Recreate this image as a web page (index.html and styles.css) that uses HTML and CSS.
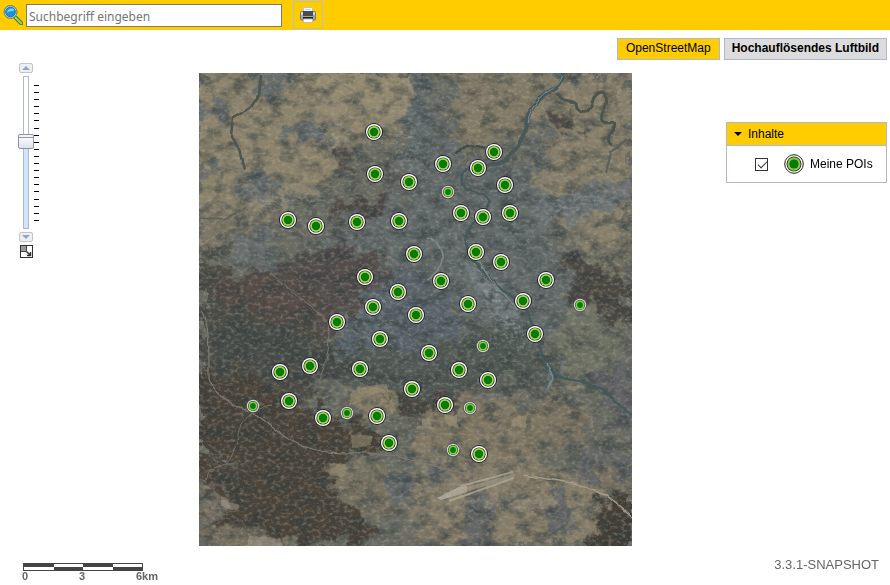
FILE: index.html
```html
<!DOCTYPE html>
<html lang="de">
<head>
    <meta charset="UTF-8">
    <meta name="viewport" content="width=device-width, initial-scale=1.0">
    <title>Karte</title>
    <link rel="stylesheet" href="styles.css">
</head>
<body>

    <header class="toolbar">
        <form class="search">
            <label for="search" aria-label="Suche">
                <svg width="20" height="20" viewBox="0 0 20 20">
                    <path d="M12.5 12.5l6 6" stroke="#3f7d1c" stroke-width="4" stroke-linecap="round"/>
                    <path d="M12.5 12.5l5.7 5.7" stroke="#a5d06a" stroke-width="2" stroke-linecap="round"/>
                    <circle cx="7.5" cy="7" r="6.5" fill="#b5d2dc" stroke="#6c7c58"/>
                    <circle cx="7.5" cy="7" r="4.8" fill="#1693e6" stroke="#1673ad"/>
                    <path d="M4 8c0-3 2-4.500 5-4.500 2 0 2.500 1 2 2-1.500 1-5 0-7 2.500z" fill="#82d3fb"/>
                </svg>
            </label>
            <input id="search" class="search-input" type="text" placeholder="Suchbegriff eingeben">
        </form>
        <button class="print" type="button" aria-label="Drucken">
            <svg width="16" height="16" viewBox="0 0 16 16">
                <path d="M3.500 0.500h9v6h-9z" fill="#f5f9fd" stroke="#b9c4cf"/>
                <path d="M5 2.500h6" stroke="#c9d3dd"/>
                <rect x="0.500" y="4.500" width="15" height="8.500" rx="1" fill="#a3a5ad" stroke="#74767e"/>
                <rect x="1" y="5" width="14" height="3" fill="#d3d5db"/>
                <rect x="3" y="4" width="10" height="5" fill="#4b4c53"/>
                <rect x="3" y="10" width="10" height="2" fill="#222"/>
                <path d="M3.500 12h9v3.500h-9z" fill="#fff" stroke="#b3bfca"/>
                <rect x="13" y="9" width="1" height="1" fill="#5bb34c"/>
            </svg>
        </button>
    </header>

    <nav class="baselayers">
        <button class="baselayer" type="button">OpenStreetMap</button>
        <button class="baselayer active" type="button">Hochauflösendes Luftbild</button>
    </nav>

    <main class="content">
        <div class="zoom">
            <div class="zoom-control">
                <button class="zoom-button" type="button" aria-label="Hineinzoomen">
                    <svg width="8" height="4" viewBox="0 0 8 4"><path d="M4 0l4 4H0z" fill="#8fa5cf"/></svg>
                </button>
                <input class="zoom-slider" type="range" min="0" max="19" value="11" aria-label="Zoomstufe">
                <button class="zoom-button" type="button" aria-label="Herauszoomen">
                    <svg width="8" height="4" viewBox="0 0 8 4"><path d="M0 0h8L4 4z" fill="#8fa5cf"/></svg>
                </button>
                <button class="zoom-full" type="button" aria-label="Gesamte Karte">
                    <svg width="13" height="13" viewBox="0 0 13 13">
                        <rect x="0.500" y="0.500" width="12" height="12" fill="#fff" stroke="#333"/>
                        <rect x="1" y="1" width="5" height="5" fill="#999"/>
                        <path d="M1 6.500h5.500V1" fill="none" stroke="#444"/>
                        <path d="M6.500 6.500l4 4M10.500 7v3.500H7" fill="none" stroke="#333" stroke-width="1.500"/>
                    </svg>
                </button>
            </div>
            <div class="ticks">
                <i></i><i></i><i></i><i></i><i></i><i></i><i></i><i></i><i></i><i></i>
                <i></i><i></i><i></i><i></i><i></i><i></i><i></i><i></i><i></i><i></i>
            </div>
        </div>

        <svg class="map" viewBox="0 0 433 473" role="img" aria-label="Luftbild">
            <defs>
                <!-- ausgefranste Ränder für Felder, Wald und Siedlung -->
                <filter id="rough" x="0" y="0" width="433" height="473" filterUnits="userSpaceOnUse" color-interpolation-filters="sRGB">
                    <feGaussianBlur stdDeviation="2.500" result="soft"/>
                    <feTurbulence type="fractalNoise" baseFrequency="0.06" numOctaves="6" seed="7" result="n"/>
                    <feDisplacementMap in="soft" in2="n" scale="45" xChannelSelector="R" yChannelSelector="G"/>
                </filter>
                <filter id="wobble" x="0" y="0" width="433" height="473" filterUnits="userSpaceOnUse" color-interpolation-filters="sRGB">
                    <feTurbulence type="fractalNoise" baseFrequency="0.08" numOctaves="2" seed="3" result="n"/>
                    <feDisplacementMap in="SourceGraphic" in2="n" scale="4" xChannelSelector="R" yChannelSelector="G"/>
                    <feGaussianBlur stdDeviation="0.4"/>
                </filter>
                <!-- dunkle und helle Körnung -->
                <filter id="dark" x="0" y="0" width="100%" height="100%" color-interpolation-filters="sRGB">
                    <feTurbulence type="fractalNoise" baseFrequency="0.06 0.09" numOctaves="6" seed="12"/>
                    <feColorMatrix values="0 0 0 0 0.19  0 0 0 0 0.23  0 0 0 0 0.24  2.500 0 0 0 -1.050"/>
                </filter>
                <filter id="light" x="0" y="0" width="100%" height="100%" color-interpolation-filters="sRGB">
                    <feTurbulence type="fractalNoise" baseFrequency="0.22 0.3" numOctaves="4" seed="31"/>
                    <feColorMatrix values="0 0 0 0 0.72  0 0 0 0 0.7  0 0 0 0 0.62  0 2.500 0 0 -1.150"/>
                </filter>
                <filter id="town" x="-20%" y="-40%" width="140%" height="180%" color-interpolation-filters="sRGB">
                    <feTurbulence type="fractalNoise" baseFrequency="0.2 0.3" numOctaves="4" seed="5"/>
                    <feColorMatrix values="0 0 0 0 0.64  0 0 0 0 0.69  0 0 0 0 0.73  0 5 0 0 -2.500" result="s"/>
                    <feGaussianBlur in="SourceAlpha" stdDeviation="7" result="m"/>
                    <feComposite in="s" in2="m" operator="in"/>
                </filter>
                <g id="poi">
                    <circle r="9" fill="#222"/>
                    <circle r="8" fill="#fff"/>
                    <circle r="6.600" fill="#222"/>
                    <circle r="5.900" fill="#9ade4e"/>
                    <circle r="4.200" fill="#2c5a1c"/>
                    <circle r="3.500" fill="#008000"/>
                </g>
                <g id="poi-small">
                    <circle r="6.900" fill="#4d4d4d"/>
                    <circle r="6.200" fill="#d3d3d3"/>
                    <circle r="5" fill="#333"/>
                    <circle r="4.500" fill="#88cf48"/>
                    <circle r="2.900" fill="#008000"/>
                </g>
            </defs>

            <rect width="433" height="473" fill="#696b63"/>

            <g filter="url(#rough)">
                <rect x="-30" y="-30" width="500" height="540" fill="#696b63"/>
                <!-- Felder -->
                <path d="M-20-20h235v75l-70 15-15 40-50 25-90 12z" fill="#8b826c"/>
                <path d="M90-20h125v68l-90-4z" fill="#938971"/>
                <path d="M220-20h145l-42 88-60 7-45-20z" fill="#817a66"/>
                <path d="M365-20h90v180l-45 20-80-40-5-70z" fill="#867e6a"/>
                <path d="M-20 135h95l-5 30-90 20z" fill="#7b7566"/>
                <path d="M345 180h100v90h-100z" fill="#777466"/>
                <path d="M345 240l80 5v90l-55-20z" fill="#6f7264"/>
                <!-- Siedlung -->
                <path d="M58-20h28v32l-8 18-20-8zM-20 28h50v14h-50zM84 50h50v18H84zM43 100h33v25H43z" fill="#666c6c"/>
                <path d="M-20 88h35v15h-35zM225 10h30v50h-35zM325 50h25v50h-25z" fill="#686c67"/>
                <path d="M205 25l25 15 35 45 60 10 30 30-5 45 35 35-25 50-35 15-65-20-75 50-45-60-10-80 80-40z" fill="#636a6a"/>
                <path d="M210 5h20l-5 45-20 15z" fill="#62696b"/>
                <path d="M340 125l95-20v25l-95 25z" fill="#6d7373"/>
                <path d="M35 155h40v35H35z" fill="#686e6d"/>
                <path d="M130 210l85-20 50 60-35 55-80 5z" fill="#59646a"/>
                <path d="M272 190l25 15 40 55 25 40-22 8-25-50-40-45z" fill="#70797b"/>
                <path d="M390 295h60v70l-50-30zM380 380h60v40h-60z" fill="#626465"/>
                <!-- Wald -->
                <path d="M135 78h22v18h-22zM355 43h20v20h-20zM125 135l60-15 10 18-60 10z" fill="#4f4a47"/>
                <path d="M80 185l65-15 45 15-15 25-25 35-30 25-90-45z" fill="#524d4b"/>
                <path d="M-20 175l35 10 30 25 50 20 30 35-30 20 25 40-90 10-60-45z" fill="#4d4d47"/>
                <path d="M10 207h90l25 35-40 10-70-25z" fill="#554b47"/>
                <path d="M20 240l80 20 60 30-10 20-80-10-50-20z" fill="#464b48"/>
                <path d="M-20 300l80 5 40 30 90 25-15 20-35 5 35 85h-215z" fill="#49433a"/>
                <path d="M160 270l60 10 70-20 30 30-70 35-100 10z" fill="#525955"/>
                <path d="M360 180l20 5 55 25v45l-30-10-30-25z" fill="#4b4843"/>
                <path d="M255 270l50-25 50 35-5 30-70-5zM330 310l60 20-20 10-50-20z" fill="#505853"/>
                <path d="M190 328l80-5v12l-80 8z" fill="#48463e"/>
                <path d="M385 430l55-15v80h-70z" fill="#433e37"/>
                <path d="M255 375l60-8v7l-58 9z" fill="#4c463d"/>
                <!-- Felder im Süden -->
                <path d="M150 315h45l5 25-45 15z" fill="#857b65"/>
                <path d="M220 340l50-15 70 10 20 30-30 30-60-15-55 5z" fill="#807764"/>
                <path d="M125 390h70l20 50h-40l-40-20z" fill="#787262"/>
                <path d="M210 388l120-5 80 35-30 65h-160z" fill="#857c69"/>
                <path d="M265 425h25v50h-25zM350 415h20v50h-20z" fill="#646565"/>
                <path d="M190 400h22v35h-22zM225 395h22v15h-22z" fill="#636869"/>
                <path d="M-20 455l100 5 5 30h-105z" fill="#746e5f"/>
                <path d="M345 320l50 15-10 45-50-10zM400 390l45 20v10l-50-5z" fill="#7a7262"/>
                <path d="M-20 405l30 5 20 30-30 15h-20zM205 460l40 5v20h-50z" fill="#746f62"/>
            </g>

            <rect width="433" height="473" filter="url(#dark)" opacity="0.6"/>
            <rect width="433" height="473" filter="url(#light)" opacity="0.38"/>

            <!-- helle Dächer -->
            <g opacity="0.55">
                <path d="M112 55h40v10h-40z" filter="url(#town)"/>
                <path d="M45 125l80-8v10l-70 8z" filter="url(#town)"/>
                <path d="M340 132l70-14v10l-70 14z" filter="url(#town)"/>
                <path d="M200 48h18v65h-22z" filter="url(#town)" opacity="0.7"/>
                <path d="M272 190l25 20 40 65-10 5-40-45z" filter="url(#town)"/>
                <path d="M255 427h110v8H245z" filter="url(#town)"/>
                <path d="M10 378l35 12v10l-30-8z" filter="url(#town)"/>
                <path d="M140 215h60v50h-50z" filter="url(#town)" opacity="0.4"/>
                <path d="M110 325h30v15h-30z" filter="url(#town)" opacity="0.5"/>
            </g>

            <g fill="none" filter="url(#wobble)">
                <!-- Fluss -->
                <path d="M365-2c-3 10-5 16-14 20-12 6-18 15-22 27-4 16-7 28-18 38-8 8-16 9-23 10" stroke="#46585a" stroke-width="4"/>
                <path d="M363 2c-4 10-8 14-17 18-9 7-14 16-17 30" stroke="#7f918f" stroke-width="1"/>
                <path d="M358 19c5 12 14 6 19 12 2 10 15 10 16 0 1-11 8-15 13-9 6 10-6 17-3 26 7 6 15-5 12 7-7 9-7 13-2 16" stroke="#4b554e" stroke-width="3"/>
                <path d="M256 80c8-7 20-9 30-5" stroke="#444c4b" stroke-width="2.500"/>
                <path d="M288 92c-15 1-28 4-25 19 2 9 22 5 29 17-3 13-28 24-25 42 3 17 16 27 28 40 12 13 28 15 35 32 5 14 12 30 15 48 8 17 24 15 39 19 20 6 29 15 50 34" stroke="#45595a" stroke-width="2.500"/>
                <path d="M348 290l6 16-6 10" stroke="#758b8c" stroke-width="1.500"/>
                <path d="M62 2l-2 20-8 12-18 10-2 20 8 12 5 20" stroke="#4c554f" stroke-width="2.500"/>
                <path d="M0 145l25 2 22-13" stroke="#5a6159" stroke-width="1.500"/>
                <path d="M428 66l-16 14-5 20" stroke="#59605a" stroke-width="2"/>
                <!-- Straßen -->
                <path d="M2 236c8 15 8 30 8 69 4 12 18 27 40 33 15 4 28 28 60 37 30 10 60 0 90 9 25 6 60 17 97 22" stroke="#7e7b70" stroke-width="1.200"/>
                <path d="M73 333c-23 2-35 18-34 32-3 12-8 20-12 27l-16 5-6 12M129 250c3 24-2 43-10 58" stroke="#7a776a" stroke-width="1"/>
                <path d="M125 0l22 14 10 5-10 24M71 200c15 12 28 22 57 48" stroke="#7c786b" stroke-width="1"/>
                <path d="M228 165c10 3 15 12 15 19s-6 18-14 22" stroke="#848a88" stroke-width="1.500"/>
                <path d="M325 402l47 8 35 12 26 22" stroke="#a39b85" stroke-width="1.500"/>
                <path d="M273 178l18 28 28 32" stroke="#8c9695" stroke-width="1"/>
                <!-- Steinbrüche und Lichtungen -->
                <g stroke="none" opacity="0.5">
                    <path d="M150 332l3-14 17-5 18-2 3 18-8-9-14 2-10 8z" fill="#9e9276"/>
                    <path d="M223 346l8-3 2 13-10-2zM245 343h14v12l-13-5zM314 345l15-3-2 14-15-3z" fill="#a3977e"/>
                    <path d="M366 314l18-2-8 7zM152 361l22 2-3 10-18 2zM131 391l16 1-3 12-12-2z" fill="#9d9176"/>
                    <path d="M22 427l20 5-4 5-16-4zM50 463l30 2 4 8H48z" fill="#a7a08f"/>
                </g>
            </g>

            <!-- Flugplatz -->
            <path d="M238 425l22-11 8-1v6l-26 8z" fill="#bbb9af" opacity="0.7"/>
            <path d="M250 428l65-23M262 413l52-14" stroke="#b9b19d" stroke-width="2" opacity="0.7"/>
            <path d="M252 421l62-18" stroke="#a39d8b" stroke-width="4" opacity="0.6"/>

            <g id="pois"></g>
        </svg>

        <aside class="side">
            <section class="layers">
                <h2 class="layers-title">
                    <svg width="8" height="5" viewBox="0 0 8 5"><path d="M0 0h8L4 4z"/></svg>
                    Inhalte
                </h2>
                <label class="layer">
                    <input class="layer-check" type="checkbox" checked>
                    <svg width="20" height="20" viewBox="-10 -10 20 20">
                        <circle r="9.300" fill="#fff" stroke="#222"/>
                        <circle r="7.500" fill="#222"/>
                        <circle r="6.700" fill="#84cb46"/>
                        <circle r="4.600" fill="#245c16"/>
                        <circle r="3.900" fill="#008000"/>
                    </svg>
                    Meine POIs
                </label>
            </section>
        </aside>
    </main>

    <footer class="bottom">
        <div class="scale">
            <div class="scale-bar"><i></i><i></i><i></i><i></i></div>
            <div class="scale-labels"><span>0</span><span>3</span><span>6km</span></div>
        </div>
        <div class="version">3.3.1-SNAPSHOT</div>
    </footer>

    <script>
        const big = [
            [175, 59], [176, 101], [210, 109], [244, 91], [279, 95], [295, 79], [306, 112],
            [262, 140], [284, 144], [311, 140], [89, 147], [117, 153], [158, 149], [200, 148],
            [215, 181], [277, 179], [302, 189], [347, 207], [166, 204], [242, 208], [199, 219],
            [174, 234], [217, 242], [269, 231], [324, 228], [138, 249], [181, 266], [336, 261],
            [230, 280], [161, 296], [111, 293], [81, 299], [260, 297], [289, 307], [213, 316],
            [90, 328], [246, 332], [124, 345], [178, 343], [190, 370], [280, 381]
        ];
        const small = [[249, 119], [381, 232], [284, 273], [54, 333], [148, 340], [271, 335], [254, 377]];

        function addPois(points, symbol) {
            const layer = document.getElementById('pois');
            points.forEach(([x, y]) => {
                const use = document.createElementNS('http://www.w3.org/2000/svg', 'use');
                use.setAttribute('href', symbol);
                use.setAttribute('x', x);
                use.setAttribute('y', y);
                layer.appendChild(use);
            });
        }

        addPois(small, '#poi-small');
        addPois(big, '#poi');
    </script>
</body>
</html>
```
FILE: styles.css
```css
* {
    box-sizing: border-box;
}

body {
    margin: 0;
    min-height: 100vh;
    display: flex;
    flex-direction: column;
    background: #fff;
    color: #000;
    font-family: 'Liberation Sans', Arial, sans-serif;
    font-size: 12px;
}

button {
    margin: 0;
    padding: 0;
    font: inherit;
    color: inherit;
}

svg {
    display: block;
}

.toolbar {
    display: flex;
    align-items: center;
    gap: 11px;
    height: 30px;
    padding-left: 3px;
    background: #ffcc00;
}

.search {
    display: flex;
    align-items: center;
    gap: 3px;
}

.search-input {
    width: 256px;
    height: 23px;
    padding: 2px 2px 0;
    border: 1px solid #7a7a7a;
    background: #fff;
    font-family: 'Noto Sans', sans-serif;
    font-size: 12px;
}

.search-input::placeholder {
    color: #757575;
}

.print {
    display: flex;
    align-items: center;
    justify-content: center;
    width: 30px;
    height: 28px;
    border: 1px solid #b6bdd2;
    background: #ffcc00;
}

.baselayers {
    display: flex;
    justify-content: flex-end;
    gap: 4px;
    padding: 8px 3px 0;
}

.baselayer {
    height: 22px;
    padding: 0 8px 2px;
    border: 1px solid #b2b8cb;
    background: #ffcc00;
}

.baselayer.active {
    padding: 0 7px 2px;
    background: #dcdcdc;
    font-weight: bold;
}

.content {
    display: grid;
    grid-template-columns: 199px minmax(0, 1fr) 258px;
    align-items: start;
}

.map {
    width: 100%;
    margin-top: 13px;
}

/* Zoomleiste */
.zoom {
    display: flex;
    padding: 3px 0 0 18px;
}

.zoom-control {
    display: flex;
    flex-direction: column;
    align-items: center;
    gap: 3px;
    width: 16px;
}

.zoom-button {
    display: flex;
    align-items: center;
    justify-content: center;
    width: 14px;
    height: 10px;
    border: 1px solid #c3c3cb;
    border-radius: 2px;
    background: #efefef;
}

.zoom-slider {
    appearance: none;
    writing-mode: vertical-lr;
    direction: rtl;
    width: 16px;
    height: 153px;
    margin: 0;
    background: none;
}

.zoom-slider::-webkit-slider-runnable-track {
    width: 6px;
    height: 153px;
    border: 1px solid #b2b8cb;
    background: linear-gradient(#fff 43%, #d0e4fb 43%);
}

.zoom-slider::-webkit-slider-thumb {
    appearance: none;
    width: 16px;
    height: 15px;
    margin-left: -6px;
    border: 1px solid #8d93a6;
    border-radius: 2px;
    background: linear-gradient(#f4f5f8 2px, #9297a5 2px, #9297a5 3px, #fafbfc 3px, #dfe2ea);
}

.zoom-full {
    border: 0;
    background: none;
}

.ticks {
    display: flex;
    flex-direction: column;
    justify-content: space-between;
    height: 136px;
    margin-top: 22px;
}

.ticks i {
    width: 5px;
    height: 1px;
    background: #000;
}

/* Ebenen */
.side {
    display: flex;
    justify-content: flex-end;
    padding: 62px 3px 0 0;
}

.layers {
    width: 161px;
    border: 1px solid #b2b8cb;
}

.layers-title {
    display: flex;
    align-items: center;
    gap: 6px;
    height: 23px;
    margin: 0;
    padding-left: 7px;
    border-bottom: 1px solid #b2b8cb;
    background: #ffcc00;
    font-size: 12px;
    font-weight: normal;
}

.layer {
    display: flex;
    align-items: center;
    gap: 6px;
    height: 36px;
    padding-left: 28px;
}

.layer-check {
    appearance: none;
    width: 13px;
    height: 13px;
    margin: 0 10px 0 0;
    border: 1px solid #333;
    background: #fff;
}

.layer-check:checked::before {
    content: '';
    display: block;
    width: 8px;
    height: 4px;
    margin: 2px 0 0 2px;
    border: solid #333;
    border-width: 0 0 1px 1px;
    transform: rotate(-45deg);
}

/* Fußzeile */
.bottom {
    display: flex;
    justify-content: space-between;
    align-items: flex-start;
    padding: 11px 11px 0 22px;
}

.scale {
    width: 136px;
    padding-top: 6px;
}

.scale-bar {
    display: flex;
    width: 120px;
    height: 8px;
    margin-left: 1px;
    border: 1px solid #444;
}

.scale-bar i {
    flex: 1;
    background: linear-gradient(#444 50%, #fff 50%);
}

.scale-bar i:nth-child(even) {
    background: linear-gradient(#fff 50%, #444 50%);
}

.scale-labels {
    display: flex;
    justify-content: space-between;
    color: #666;
    font-size: 11px;
    font-weight: bold;
    line-height: 11px;
}

.version {
    color: #666;
    font-size: 13px;
    line-height: 16px;
}
```
